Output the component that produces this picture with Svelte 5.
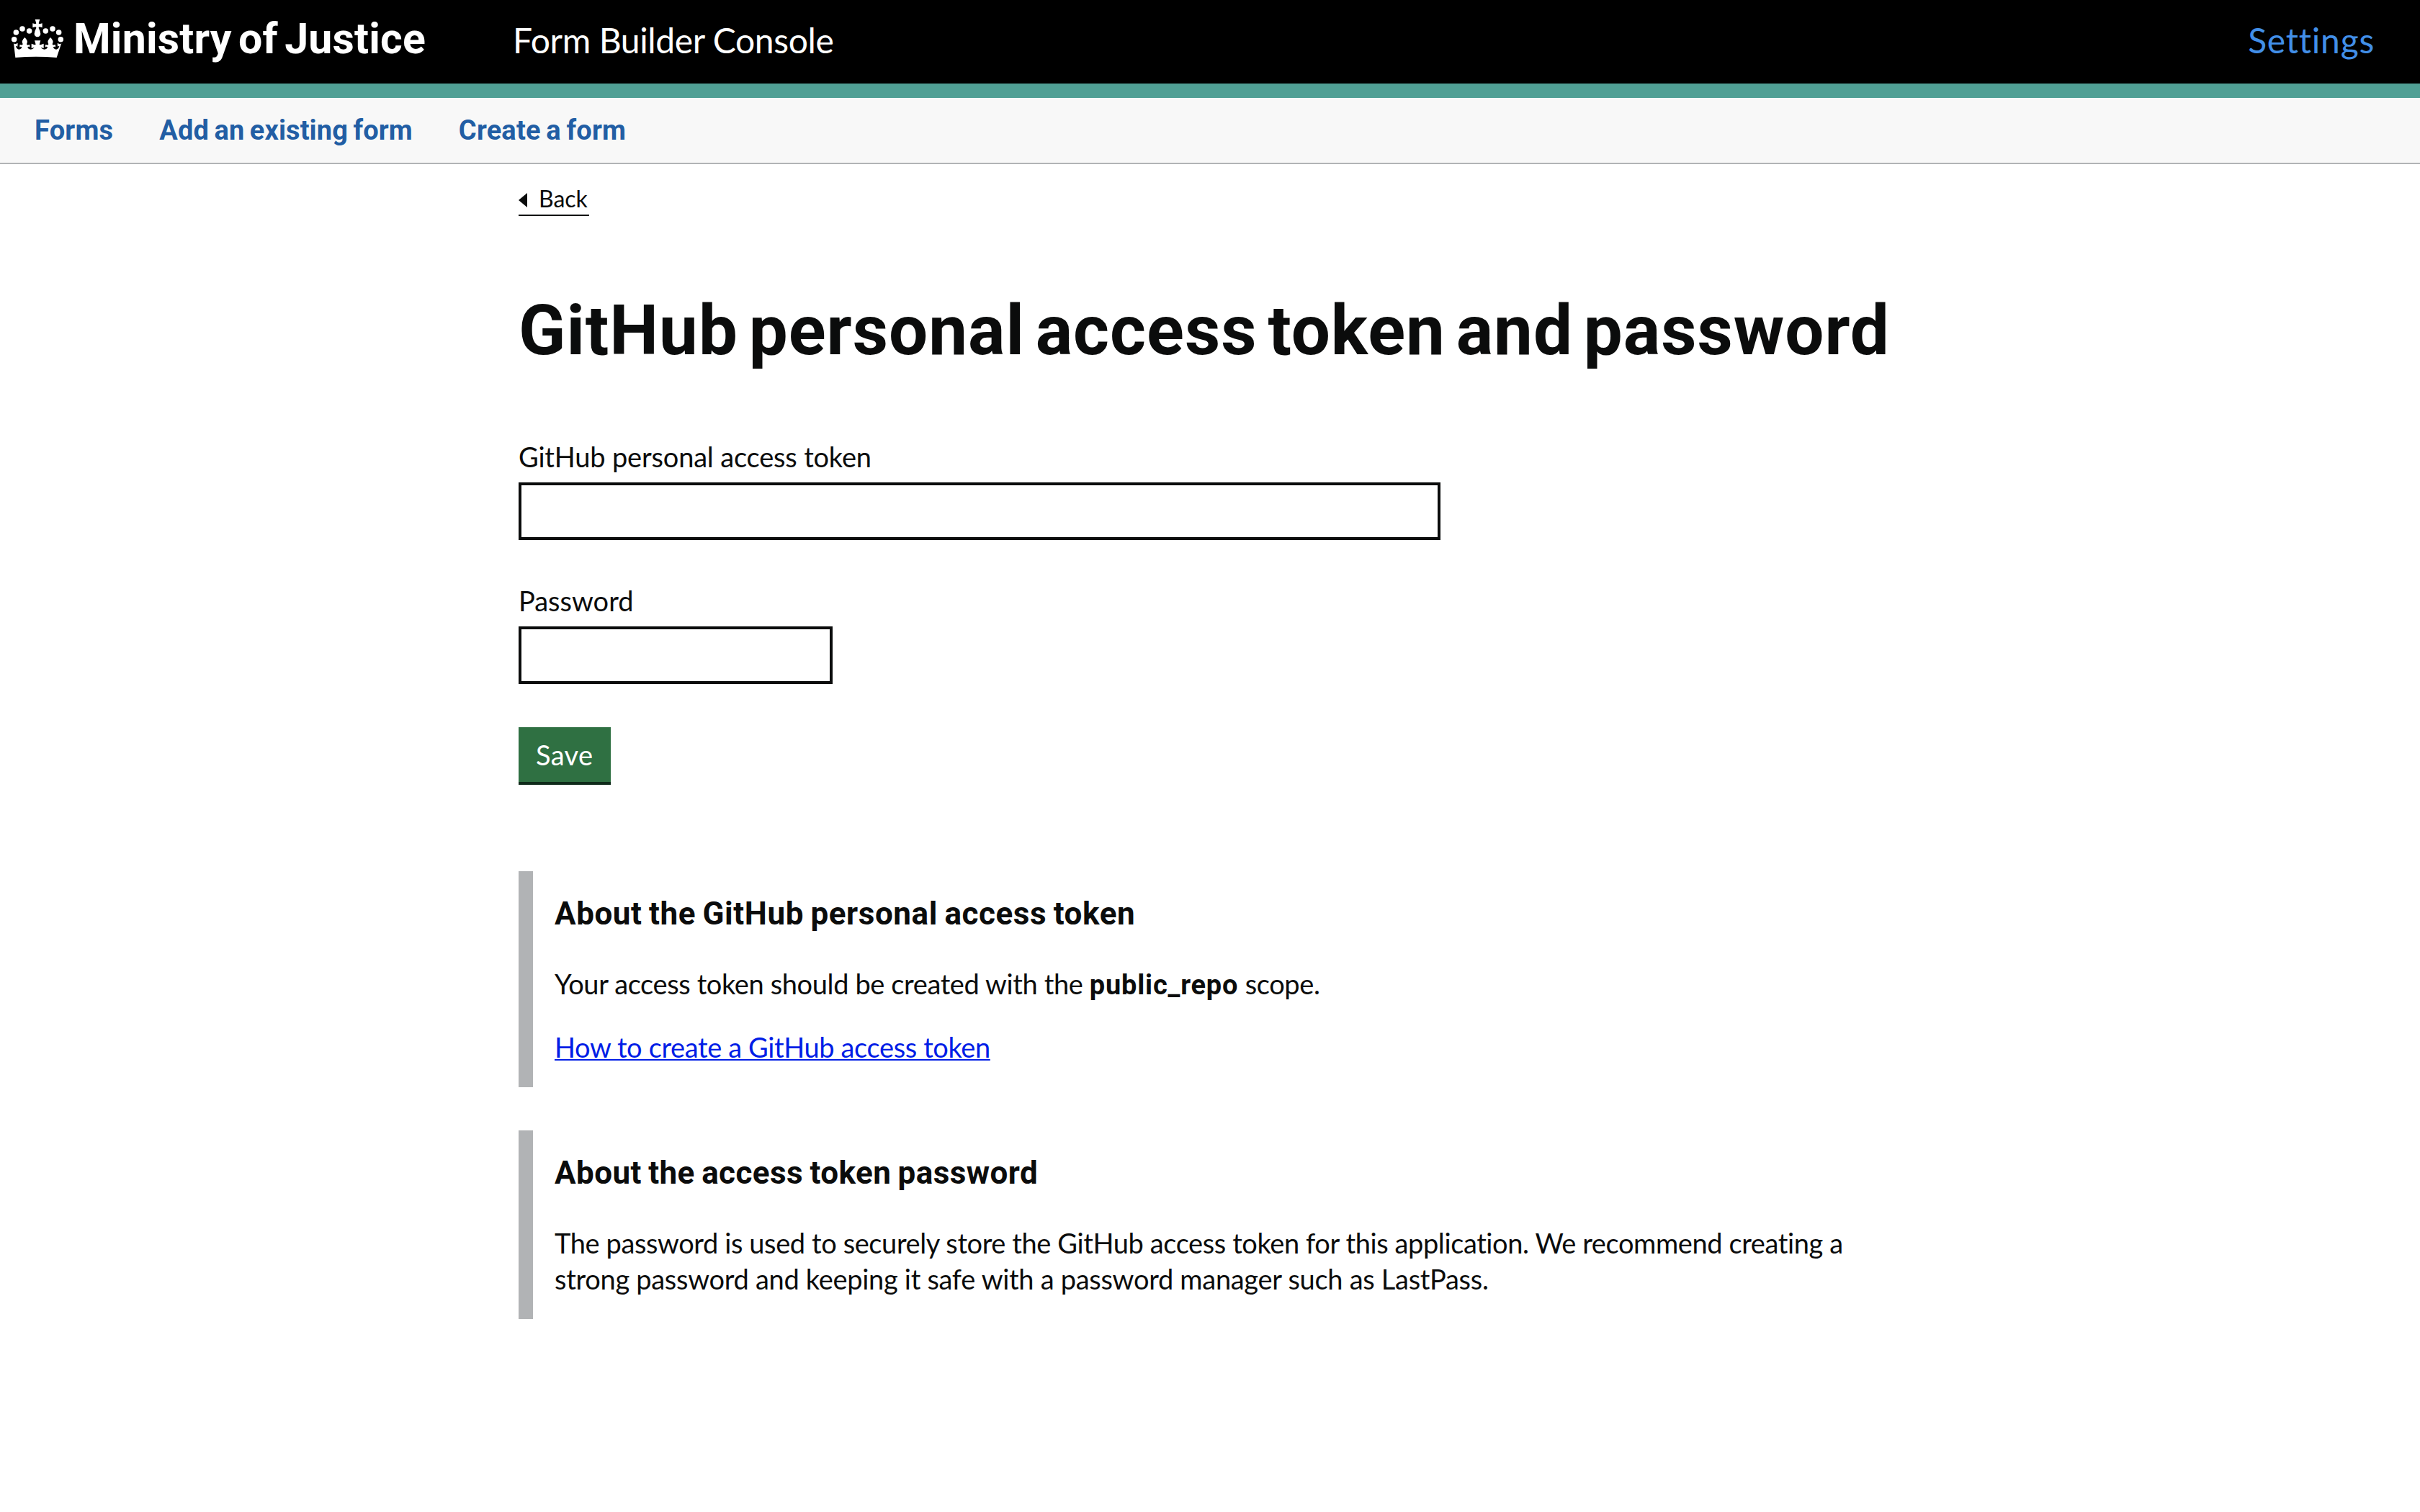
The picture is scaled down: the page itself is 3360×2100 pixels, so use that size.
<script>
  const navItems = [
    { label: 'Forms', cls: 'forms' },
    { label: 'Add an existing form', cls: 'existing' },
    { label: 'Create a form', cls: 'create' }
  ];
  const dots = [
    [59, 135], [67, 106], [93, 91], [122, 100],
    [190, 100], [219, 91], [245, 106], [253, 135]
  ];
</script>

<header class="header">
  <a class="brand" href="#home">
    <svg class="crown" viewBox="48 52 216 159" aria-hidden="true">
      {#each dots as [cx, cy]}
        <circle {cx} {cy} r="11.3" />
      {/each}
      <path d="M146 52h20l-5 16q1 3 5 3l10-3v18l-11-3q-5 0-4 5q8 14 8 24a13 13 0 0 1-26 0q0-10 8-24q1-5-4-5l-11 3v-18l10 3q4 0 5-3z" />
      <path d="M57 151q5 6 8 3l9-3l-1 14q-5-4-7-1q5 14 14 13q10-2 11-10q-5-4-9 1v-11q7 2 11 1l2-3q-8-14 8-28q16 14 8 28l2 3q4 1 11-1v11q-4-5-9-1q1 8 11 10q11 0 17-9l-12 4v-19l13 5l5-2l-5-16h25l-5 16l5 2l13-5v19l-12-4q6 9 17 9q10-2 11-10q-5-4-9 1v-11q7 2 11 1l2-3q-8-14 8-28q16 14 8 28l2 3q4 1 11-1v11q-4-5-9-1q1 8 11 10q9 1 14-13q-2-3-7 1l-1-14l9 3q3 3 8-3l-20 60q-86-7-172 0z" />
    </svg>
    <span class="brand-name">Ministry of Justice</span>
  </a>
  <span class="product">Form Builder Console</span>
  <a class="settings" href="#settings">Settings</a>
</header>

<nav class="nav">
  {#each navItems as item}
    <a class={item.cls} href="#{item.cls}">{item.label}</a>
  {/each}
</nav>

<main class="page">
  <a class="back" href="#back">
    <svg class="arrow" viewBox="0 0 12 20" aria-hidden="true"><path d="M12 0v20L0 10z" /></svg>
    <span>Back</span>
  </a>
  <h1>GitHub personal access token and password</h1>

  <form>
    <label class="token-label" for="token">GitHub personal access token</label>
    <input class="token" id="token" type="text" />
    <label for="password">Password</label>
    <input class="password" id="password" type="password" />
    <button type="button">Save</button>
  </form>

  <section class="inset">
    <h2>About the GitHub personal access token</h2>
    <p class="scope">Your access token should be created with the <strong>public_repo</strong> scope.</p>
    <p class="how"><a href="#how">How to create a GitHub access token</a></p>
  </section>

  <section class="inset">
    <h2 class="second">About the access token password</h2>
    <p class="about">The password is used to securely store the GitHub access token for this application. We recommend creating a<br /><span>strong password and keeping it safe with a password manager such as LastPass.</span></p>
  </section>
</main>

<style>
  :global(body) {
    background: #fff;
    color: #0b0c0c;
    font: 400 38px/50px Lato, "Liberation Sans", sans-serif;
  }
  a { text-decoration: none; }
  h1, h2, strong, .nav, .brand { font-family: Roboto, "Liberation Sans", sans-serif; font-weight: 700; }

  .header {
    box-sizing: border-box;
    display: flex;
    align-items: flex-start;
    height: 136px;
    padding: 24px 63px 0 16px;
    background: #000;
    border-bottom: 20px solid #50a095;
    color: #fff;
    font-size: 48px;
    line-height: 60px;
  }
  .brand { display: flex; width: 696px; color: #fff; font-size: 59px; }
  .crown { flex: none; width: 72px; height: 53px; margin: 3px 14px 0 0; fill: #fff; }
  .brand-name { letter-spacing: 0.2px; word-spacing: -5.5px; }
  .product { flex: 1; margin-top: 2px; letter-spacing: -0.37px; }
  .settings { margin-top: 2px; color: #428fe8; letter-spacing: 0.79px; }

  .nav {
    box-sizing: border-box;
    display: flex;
    gap: 64px;
    height: 92px;
    padding: 20px 48px 0;
    background: #f8f8f8;
    border-bottom: 2px solid #b1b4b6;
    letter-spacing: 0.2px;
    word-spacing: -2px;
  }
  .nav a { color: #225ea4; }
  .nav .existing { letter-spacing: 0.1px; }

  .page { width: 1920px; margin: 0 auto; }
  .back {
    display: flex;
    align-items: flex-start;
    gap: 16px;
    box-sizing: border-box;
    width: 98px;
    height: 46px;
    margin-top: 26px;
    border-bottom: 2px solid #0b0c0c;
    color: #0b0c0c;
    font-size: 32px;
    line-height: 43px;
  }
  .arrow { flex: none; width: 12px; height: 20px; margin-top: 14px; fill: #0b0c0c; }

  h1 { margin: 109px 0 0; font-size: 96px; line-height: 100px; letter-spacing: 1px; word-spacing: -10px; white-space: nowrap; }

  form { display: flex; flex-direction: column; align-items: flex-start; padding-top: 99px; }
  label { padding-top: 1px; margin-bottom: 11px; }
  .token-label { letter-spacing: -0.18px; }
  input {
    box-sizing: border-box;
    height: 80px;
    margin: 0 0 58px;
    padding: 8px;
    border: 4px solid #0b0c0c;
    border-radius: 0;
    background: #fff;
    font: inherit;
  }
  .token { width: 1280px; }
  .password { width: 436px; margin-bottom: 60px; }
  button {
    box-sizing: border-box;
    width: 128px;
    height: 80px;
    padding: 13px 0 13px 24px;
    border: 0;
    border-bottom: 4px solid #0f2a1a;
    background: #2f7042;
    color: #fff;
    font: inherit;
    letter-spacing: 0.36px;
    text-align: left;
  }

  .inset {
    box-sizing: border-box;
    margin-top: 60px;
    padding: 29px 0 31px 30px;
    border-left: 20px solid #b1b3b5;
  }
  form + .inset { margin-top: 120px; }
  h2 { margin: 0 0 42px; font-size: 44px; line-height: 60px; letter-spacing: 0.57px; word-spacing: -2px; }
  h2.second { letter-spacing: 0.43px; }
  p { margin: 0; white-space: nowrap; letter-spacing: -0.38px; }
  .how { margin-top: 38px; letter-spacing: -0.38px; }
  .how a {
    color: #001de6;
    text-decoration: underline;
    text-decoration-thickness: 2px;
    text-underline-offset: 2px;
    text-decoration-skip-ink: none;
  }
  strong { line-height: 0; letter-spacing: 0.8px; }
  .about { letter-spacing: -0.4px; }
  .about span { letter-spacing: -0.3px; }
</style>
